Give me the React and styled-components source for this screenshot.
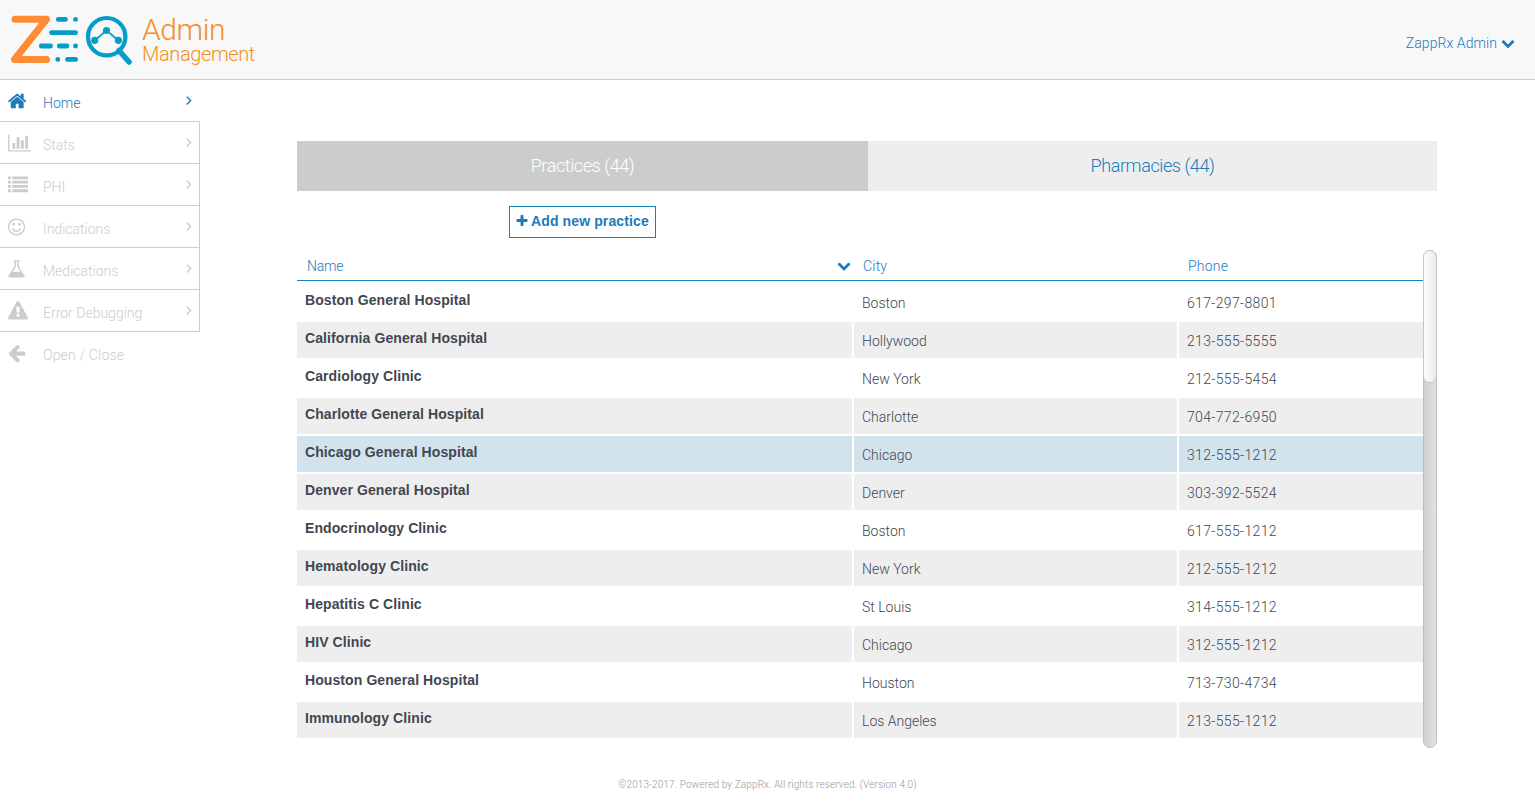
import React from 'react';
import styled, { createGlobalStyle, css } from 'styled-components';

const LIGHT = `Roboto, "Liberation Sans", sans-serif`;
const BOLD = `"Liberation Sans", Arial, sans-serif`;
const BLUE = '#1a7bbd';

const GlobalStyle = createGlobalStyle`
  * { box-sizing: border-box; }
  body { margin: 0; background: #fff; font-family: ${LIGHT}; font-weight: 300; font-size: 14px; color: #414751; overflow: hidden; }
`;

const Page = styled.div`
  display: flex;
  flex-direction: column;
  height: 805px;
`;

const Header = styled.header`
  display: flex;
  justify-content: space-between;
  height: 80px;
  flex: none;
  background: #f8f8f8;
  border-bottom: 1px solid #cccccc;
`;

const Brand = styled.div`
  display: flex;
  padding: 12px 0 0 8px;
`;

const BrandText = styled.div`
  display: flex;
  flex-direction: column;
  padding: 3px 0 0 6px;
  color: #f39021;
`;

const BrandTitle = styled.span`
  font-size: 30px;
  line-height: 30px;
  height: 29px;
  letter-spacing: -0.45px;
`;

const BrandSubtitle = styled.span`
  font-size: 20px;
  line-height: 20px;
  letter-spacing: -0.38px;
`;

const UserMenu = styled.div`
  display: flex;
  align-items: center;
  gap: 4px;
  height: 20px;
  margin: 33px 20px 0 0;
  color: ${BLUE};
  letter-spacing: 0.07px;
`;

const Body = styled.div`
  display: flex;
  flex: 1;
`;

const Sidebar = styled.nav`
  width: 200px;
  flex: none;
`;

const NavItem = styled.div`
  display: flex;
  align-items: flex-start;
  height: 42px;
  padding: 11px ${(p) => (p.$active ? 7 : 6)}px 0 8px;
  color: ${(p) => (p.$active ? BLUE : '#cccccc')};
  border-bottom: 1px solid ${(p) => (p.$last ? 'transparent' : '#cccccc')};
  border-right: ${(p) => (p.$active || p.$last ? '0' : '1px solid #cccccc')};
`;

const NavIcon = styled.span`
  display: flex;
  width: 35px;
  height: 20px;
`;

const NavLabel = styled.span`
  flex: 1;
  line-height: 24px;
  letter-spacing: ${(p) => (p.$last ? 0.18 : 0)}px;
`;

const Main = styled.main`
  flex: 1;
  padding: 61px 98px 0 97px;
`;

const Tabs = styled.div`
  display: grid;
  grid-template-columns: 571px 569px;
  height: 50px;
`;

const Tab = styled.div`
  display: flex;
  align-items: center;
  justify-content: center;
  padding-bottom: 2px;
  font-size: 18px;
  letter-spacing: -0.4px;
  background: ${(p) => (p.$active ? '#cccccc' : '#eeeeee')};
  color: ${(p) => (p.$active ? '#ffffff' : BLUE)};
`;

const AddButton = styled.button`
  display: flex;
  align-items: center;
  gap: 2px;
  width: 147px;
  height: 32px;
  margin: 15px 0 12px 212px;
  padding: 0 5px 2px;
  border: 1px solid ${BLUE};
  background: #fff;
  color: ${BLUE};
  font: bold 14px ${BOLD};
  letter-spacing: 0.12px;
  white-space: nowrap;
`;

const ListPanel = styled.section`
  display: flex;
  width: 1140px;
  height: 498px;
`;

const Table = styled.div`
  width: 1126px;
`;

const columns = css`
  display: grid;
  grid-template-columns: 555px 323px 244px;
  column-gap: 2px;
`;

const HeadRow = styled.div`
  ${columns}
  height: 31px;
  margin-bottom: 3px;
  border-bottom: 1px solid ${BLUE};
  color: ${BLUE};
`;

const HeadCell = styled.div`
  display: flex;
  align-items: center;
  justify-content: space-between;
  padding: 2px 1px 0 ${(p) => (p.$first ? 10 : 9)}px;
  letter-spacing: ${(p) => (p.$first ? -0.2 : 0.2)}px;
`;

const Row = styled.div`
  ${columns}
  grid-template-rows: 36px;
  height: 36px;
  margin-bottom: 2px;
`;

const Cell = styled.div`
  padding: 0 8px;
  line-height: 38px;
  background: ${(p) => p.$tone};
  letter-spacing: ${(p) => (p.$digits ? '0.35px' : '0')};
`;

const NameCell = styled(Cell)`
  line-height: 32px;
  font-family: ${BOLD};
  font-weight: bold;
  letter-spacing: 0.09px;
`;

const ScrollTrack = styled.div`
  width: 14px;
  height: 498px;
  border: 1px solid #bdbdbb;
  border-radius: 7px;
  background: linear-gradient(90deg, #cfcfcf, #e3e3e3);
`;

const ScrollThumb = styled.div`
  width: 14px;
  height: 133px;
  margin: -1px;
  border: 1px solid #c9c8c4;
  border-radius: 7px;
  background: linear-gradient(90deg, #fdfdfd, #eaeae8);
`;

const Footer = styled.footer`
  height: 44px;
  flex: none;
  padding-top: 17px;
  font-size: 10px;
  line-height: 14px;
  text-align: center;
  letter-spacing: 0.12px;
  color: #999999;
`;

const paths = {
  home: 'M1472 992v480q0 26-19 45t-45 19h-384v-384h-256v384h-384q-26 0-45-19t-19-45v-480q0-1 .5-3t.5-3l575-474 575 474q1 2 1 6zm223-69l-62 74q-8 9-21 11h-3q-13 0-21-7l-692-577-692 577q-12 8-24 7-13-2-21-11l-62-74q-8-10-7-23.5t11-21.5l719-599q32-26 76-26t76 26l244 204v-195q0-14 9-23t23-9h192q14 0 23 9t9 23v408l219 182q10 8 11 21.5t-7 23.5z',
  chart: 'M640 896v512h-256v-512h256zm384-512v1024h-256v-1024h256zm1024 1152v128h-2048v-1536h128v1408h1920zm-640-896v768h-256v-768h256zm384-384v1152h-256v-1152h256z',
  list: 'M0 1280h256v256h-256zM0 896h256v256h-256zM0 512h256v256h-256zM0 128h256v256h-256zM384 1280h1408v256h-1408zM384 896h1408v256h-1408zM384 512h1408v256h-1408zM384 128h1408v256h-1408z',
  smile: 'M1262 1075q-37 121-138 195t-228 74-228-74-138-195q-8-25 4-48.5t38-31.5q25-8 48.5 4t31.5 38q25 80 92.5 129.5t151.5 49.5 151.5-49.5 92.5-129.5q8-26 32-38t49-4 37 31.5 4 48.5zm-494-435q0 53-37.5 90.5t-90.5 37.5-90.5-37.5-37.5-90.5 37.5-90.5 90.5-37.5 90.5 37.5 37.5 90.5zm512 0q0 53-37.5 90.5t-90.5 37.5-90.5-37.5-37.5-90.5 37.5-90.5 90.5-37.5 90.5 37.5 37.5 90.5zm256 256q0-130-51-248.5t-136.5-204-204-136.5-248.5-51-248.5 51-204 136.5-136.5 204-51 248.5 51 248.5 136.5 204 204 136.5 248.5 51 248.5-51 204-136.5 136.5-204 51-248.5zm128 0q0 209-103 385.5t-279.5 279.5-385.5 103-385.5-103-279.5-279.5-103-385.5 103-385.5 279.5-279.5 385.5-103 385.5 103 279.5 279.5 103 385.5z',
  flask: 'M1527 1447q56 89 21.5 153t-140.5 64h-1152q-106 0-140.5-64t21.5-153l503-793v-399h-64q-26 0-45-19t-19-45 19-45 45-19h512q26 0 45 19t19 45-19 45-45 19h-64v399zm-779-725l-272 429h712l-272-429-20-31v-436h-128v436z',
  warning: 'M1024 1375v-190q0-14-9.5-23.5t-22.5-9.5h-192q-13 0-22.5 9.5t-9.5 23.5v190q0 14 9.5 23.5t22.5 9.5h192q13 0 22.5-9.5t9.5-23.5zm-2-374l18-459q0-12-10-19-13-11-24-11h-220q-11 0-24 11-10 7-10 21l17 457q0 10 10 16.5t24 6.5h185q14 0 23.5-6.5t10.5-16.5zm-14-934l768 1408q35 63-2 126-17 29-46.5 46t-63.5 17h-1536q-34 0-63.5-17t-46.5-46q-37-63-2-126l768-1408q17-31 47-49t65-18 65 18 47 49z',
  back: 'M1664 896v128q0 53-32.5 90.5t-84.5 37.5h-704l293 294q38 36 38 90t-38 90l-75 76q-37 37-90 37-52 0-91-37l-651-652q-37-37-37-90 0-52 37-91l651-650q38-38 91-38 52 0 90 38l75 74q38 38 38 91t-38 91l-293 293h704q52 0 84.5 37.5t32.5 90.5z',
  down: 'M1683 808l-742 741q-19 19-45 19t-45-19l-742-741q-19-19-19-45.5t19-45.5l166-165q19-19 45-19t45 19l531 531 531-531q19-19 45-19t45 19l166 165q19 19 19 45.5t-19 45.5z',
  plus: 'M1600 736v192q0 40-28 68t-68 28h-416v416q0 40-28 68t-68 28h-192q-40 0-68-28t-28-68v-416h-416q-40 0-68-28t-28-68v-192q0-40 28-68t68-28h416v-416q0-40 28-68t68-28h192q40 0 68 28t28 68v416h416q40 0 68 28t28 68z',
};

const Icon = ({ name, size = 20, box = '0 0 1792 1792', width = size }) => (
  <svg width={width} height={size} viewBox={box} fill="currentColor">
    <path d={paths[name]} />
  </svg>
);

const Angle = styled.svg.attrs({ viewBox: '0 0 8 12', children: <path d="M1.8 1.8 5.6 5.6 1.8 9.4" /> })`
  width: 8px;
  height: 12px;
  margin-top: 4px;
  fill: none;
  stroke: currentColor;
  stroke-width: 1.4;
`;

const Logo = () => (
  <svg width="128" height="56" viewBox="8 12 128 56" fill="none" strokeLinecap="round" strokeLinejoin="round">
    <path d="M15 19.3H46.5L14.5 59.5H46.5" stroke="#ff8c35" strokeWidth="7" />
    <g stroke="#039dca" strokeWidth="4.8">
      <path d="M58.3 19.4H65.5M75.5 19.4H75.6M51.5 32.6H75.6M41.3 46H50.5M59.3 46H67M75.5 46H75.6M57.8 59.4H57.9M67.5 59.4H75.6" />
      <circle cx="106.7" cy="36.7" r="18.7" strokeWidth="4.2" />
      <path d="M94.7 40.5 106.5 30.3 118.3 40.5" strokeWidth="1.7" />
      <path d="M119 50.5 129 62" strokeWidth="5.5" />
    </g>
    <g fill="#039dca">
      <circle cx="94.7" cy="40.3" r="3.6" />
      <circle cx="106.5" cy="30.5" r="3.6" />
      <circle cx="118.4" cy="40.3" r="3.6" />
    </g>
  </svg>
);

const nav = [
  { label: 'Home', icon: 'home', box: '72 0 1792 1792' },
  { label: 'Stats', icon: 'chart', box: '0 0 2048 1792', width: 23 },
  { label: 'PHI', icon: 'list' },
  { label: 'Indications', icon: 'smile', box: '128 0 1792 1792' },
  { label: 'Medications', icon: 'flask', box: '64 0 1792 1792' },
  { label: 'Error Debugging', icon: 'warning' },
  { label: 'Open / Close', icon: 'back', box: '120 0 1792 1792' },
];

const practices = [
  ['Boston General Hospital', 'Boston', '617-297-8801'],
  ['California General Hospital', 'Hollywood', '213-555-5555'],
  ['Cardiology Clinic', 'New York', '212-555-5454'],
  ['Charlotte General Hospital', 'Charlotte', '704-772-6950'],
  ['Chicago General Hospital', 'Chicago', '312-555-1212'],
  ['Denver General Hospital', 'Denver', '303-392-5524'],
  ['Endocrinology Clinic', 'Boston', '617-555-1212'],
  ['Hematology Clinic', 'New York', '212-555-1212'],
  ['Hepatitis C Clinic', 'St Louis', '314-555-1212'],
  ['HIV Clinic', 'Chicago', '312-555-1212'],
  ['Houston General Hospital', 'Houston', '713-730-4734'],
  ['Immunology Clinic', 'Los Angeles', '213-555-1212'],
];

const HOVERED = 4;
const rowTone = (i) => (i === HOVERED ? '#d2e3ee' : i % 2 ? '#eeeeee' : '#ffffff');

export default function App() {
  return (
    <Page>
      <GlobalStyle />
      <Header>
        <Brand>
          <Logo />
          <BrandText>
            <BrandTitle>Admin</BrandTitle>
            <BrandSubtitle>Management</BrandSubtitle>
          </BrandText>
        </Brand>
        <UserMenu>
          ZappRx Admin
          <Icon name="down" size={14} />
        </UserMenu>
      </Header>
      <Body>
        <Sidebar>
          {nav.map(({ label, icon, box, width }, i) => {
            const last = i === nav.length - 1;
            return (
              <NavItem key={label} $active={i === 0} $last={last}>
                <NavIcon>
                  <Icon name={icon} box={box} width={width} />
                </NavIcon>
                <NavLabel $last={last}>{label}</NavLabel>
                {!last && <Angle />}
              </NavItem>
            );
          })}
        </Sidebar>
        <Main>
          <Tabs>
            <Tab $active>Practices (44)</Tab>
            <Tab>Pharmacies (44)</Tab>
          </Tabs>
          <AddButton>
            <Icon name="plus" size={14} />
            Add new practice
          </AddButton>
          <ListPanel>
            <Table>
              <HeadRow>
                <HeadCell $first>
                  Name
                  <Icon name="down" size={14} box="0 64 1792 1792" />
                </HeadCell>
                <HeadCell>City</HeadCell>
                <HeadCell>Phone</HeadCell>
              </HeadRow>
              {practices.map(([name, city, phone], i) => (
                <Row key={name}>
                  <NameCell $tone={rowTone(i)}>{name}</NameCell>
                  <Cell $tone={rowTone(i)}>{city}</Cell>
                  <Cell $tone={rowTone(i)} $digits>{phone}</Cell>
                </Row>
              ))}
            </Table>
            <ScrollTrack>
              <ScrollThumb />
            </ScrollTrack>
          </ListPanel>
        </Main>
      </Body>
      <Footer>©2013-2017. Powered by ZappRx. All rights reserved. (Version 4.0)</Footer>
    </Page>
  );
}
